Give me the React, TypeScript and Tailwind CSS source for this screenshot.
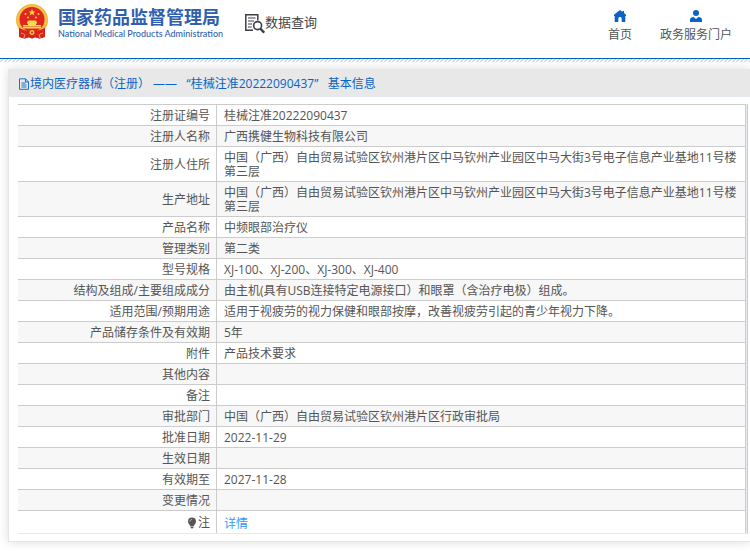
import React from "react";

type Row = { label: string; value: string };

const rows: Row[] = [
  { label: "注册证编号", value: "桂械注准20222090437" },
  { label: "注册人名称", value: "广西携健生物科技有限公司" },
  { label: "注册人住所", value: "中国（广西）自由贸易试验区钦州港片区中马钦州产业园区中马大街3号电子信息产业基地11号楼第三层" },
  { label: "生产地址", value: "中国（广西）自由贸易试验区钦州港片区中马钦州产业园区中马大街3号电子信息产业基地11号楼第三层" },
  { label: "产品名称", value: "中频眼部治疗仪" },
  { label: "管理类别", value: "第二类" },
  { label: "型号规格", value: "XJ-100、XJ-200、XJ-300、XJ-400" },
  { label: "结构及组成/主要组成成分", value: "由主机(具有USB连接特定电源接口）和眼罩（含治疗电极）组成。" },
  { label: "适用范围/预期用途", value: "适用于视疲劳的视力保健和眼部按摩，改善视疲劳引起的青少年视力下降。" },
  { label: "产品储存条件及有效期", value: "5年" },
  { label: "附件", value: "产品技术要求" },
  { label: "其他内容", value: "" },
  { label: "备注", value: "" },
  { label: "审批部门", value: "中国（广西）自由贸易试验区钦州港片区行政审批局" },
  { label: "批准日期", value: "2022-11-29" },
  { label: "生效日期", value: "" },
  { label: "有效期至", value: "2027-11-28" },
  { label: "变更情况", value: "" },
];

function Emblem() {
  return (
    <svg viewBox="0 0 32 36" className="h-9 w-8 shrink-0" aria-hidden="true">
      <path d="M5 24h22l1 9-5 1.500-4-2-3 2-3-2-4 2-5-1.500z" fill="#d8231f" />
      <circle cx="16" cy="16" r="16" fill="#f0b63c" />
      <circle cx="16" cy="16" r="14" fill="none" stroke="#f8d765" strokeWidth="1" strokeDasharray="2 1" />
      <circle cx="16" cy="15.500" r="12.500" fill="#e1251f" />
      <path d="M16 5l1 2.500h2.600l-2.100 1.600.8 2.500-2.300-1.500-2.300 1.500.8-2.500-2.100-1.600H15z" fill="#f9d94d" />
      <g fill="#f9d94d">
        <circle cx="9.500" cy="10" r="1" />
        <circle cx="22.500" cy="10" r="1" />
        <circle cx="12" cy="13.500" r="1" />
        <circle cx="20" cy="13.500" r="1" />
        <path d="M11 18l1.500-1.500h7L21 18v1.500h-1V21h5v3.500H7V21h5v-1.500h-1z" />
      </g>
      <path d="M7 22.500h18" stroke="#dc702a" strokeWidth=".6" />
      <path d="M3 23.500c4 3 8 3 10 3.500l3-1 3 1c2-.5 6-.5 10-3.500v9.500l-5 1.500-5-1-3 1-3-1-5 1-5-1.500z" fill="#d8231f" />
      <circle cx="16" cy="28.500" r="2.500" fill="#f3c044" />
      <circle cx="16" cy="28.500" r="1" fill="#d8231f" />
      <path d="M9 30l-1 4M23 30l1 4M5 29l3 1M27 29l-3 1" stroke="#f3c044" strokeWidth=".8" />
    </svg>
  );
}

function SearchDocument() {
  return (
    <svg viewBox="0 0 20 20" className="size-5" fill="none" stroke="#3d3c48" aria-hidden="true">
      <path d="M8 16.200H.8V.8h12v5.700" strokeWidth="1.500" />
      <path d="M3 4h7.500M3 7h6M3 10h4M3 13h3.500" strokeWidth="1.200" />
      <circle cx="12.600" cy="11.600" r="4" strokeWidth="1.600" />
      <path d="M15.500 14.700l3.700 4" strokeWidth="2.400" />
    </svg>
  );
}

function Header() {
  return (
    <header>
      <div className="flex h-[58px] items-start justify-between bg-white pl-4 pr-[18px]">
        <div className="flex items-start">
          <a href="#home" className="flex items-start gap-[10px] pt-1 text-[#315fae]">
            <Emblem />
            <span className="block pt-[2px]">
              <span className="block text-[18px] font-bold leading-[22px]">国家药品监督管理局</span>
              <span className="block font-['Lato',sans-serif] text-[9px] font-medium leading-3">
                National Medical Products Administration
              </span>
            </span>
          </a>
          <a href="#search" className="ml-[22px] flex items-start pt-3 text-[#454545]">
            <span className="pt-[2px]">
              <SearchDocument />
            </span>
            <span className="text-[13px] leading-5">数据查询</span>
          </a>
        </div>
        <nav className="flex gap-7 pt-[9px] text-[#555]">
          <a href="#home" className="flex flex-col items-center gap-[5px]">
            <svg viewBox="0 0 12 12" className="h-[14px] w-3" fill="#0863c5" aria-hidden="true">
              <path d="M6 0L0 4.700V6h.7v6h3.600V8.700C4.300 6.500 7.700 6.500 7.700 8.700V12h3.600V6h.7V4.700L10 3V1H8.500v1z" />
            </svg>
            <span className="leading-[14px]">首页</span>
          </a>
          <a href="#portal" className="flex flex-col items-center gap-[5px]">
            <svg viewBox="0 0 12 12" className="h-[14px] w-3" fill="#0863c5" aria-hidden="true">
              <circle cx="6" cy="3" r="3" />
              <path d="M0 12V9.800C0 8 1.500 7 3.700 7L6 9l2.300-2C10.500 7 12 8 12 9.800V12z" />
            </svg>
            <span className="leading-[14px]">政务服务门户</span>
          </a>
        </nav>
      </div>
      <div className="h-px bg-[#0066bf]" />
      <div className="h-[3px] bg-[linear-gradient(135deg,#fff_25%,#ddd_25%,#ddd_50%,#fff_50%,#fff_75%,#ddd_75%)] bg-[length:4px_4px]" />
    </header>
  );
}

export default function App() {
  return (
    <div className="min-h-screen overflow-x-hidden bg-white font-['Open_Sans','Noto_Sans_CJK_SC',sans-serif] text-[12px] leading-[14px] text-[#555]">
      <Header />
      <main className="pb-2 pl-2 pt-[7px]">
        <section className="border-b border-l border-[#e6e6e6] bg-white pb-[7px] shadow-[0_0_10px_rgba(0,0,0,0.14)]">
          <h1 className="flex h-7 items-center border-b border-[#e6eaf5] bg-[#e8e8e8] pl-[9px] pt-[2px] text-[#0863c5]">
            <svg viewBox="0 0 12 12" className="size-3 shrink-0" fill="none" stroke="currentColor" strokeWidth=".9" aria-hidden="true">
              <path d="M1.500.8h6L10.500 4v7.300h-9zM7.500.8V4h3M3.500 5h4M3.500 7h5M3.500 9h5" />
            </svg>
            境内医疗器械（注册） ——&nbsp;&nbsp; “桂械注准20222090437”&nbsp;&nbsp; 基本信息
          </h1>
          <div className="ml-[9px] mr-[2px] mt-[7px] border-b border-r border-b-[#e6e9f3] border-r-[#ccc] bg-[#e9ebf5] pr-px">
            <table className="w-full border-separate border-spacing-0 border-t border-[#ccc] bg-white">
              <tbody>
                {rows.map((row) => (
                  <tr key={row.label} className="even:bg-[#f7f7f7]">
                    <th scope="row" className="w-[199px] border-b border-r border-[#ccc] pb-[2px] pr-[6px] pt-1 text-right font-normal">
                      {row.label}
                    </th>
                    <td className="h-[21px] border-b border-r border-[#ccc] pb-[2px] pl-[7px] pr-[5px] pt-1">{row.value}</td>
                  </tr>
                ))}
                <tr>
                  <th scope="row" className="border-r border-[#ccc] pb-[3px] pr-[6px] pt-[5px] font-normal">
                    <span className="flex items-center justify-end">
                      <svg viewBox="0 0 12 12" className="size-3" aria-hidden="true">
                        <path d="M6 .5a4 4 0 0 1 4 4c0 2.500-2 3-2.200 4.500H4.200C4 7.500 2 7 2 4.500a4 4 0 0 1 4-4zM4.500 9.500h3v1l-1 1h-1l-1-1z" fill="#555" />
                        <path d="M4 4.500C4 3 5 2.500 6 2.500" fill="none" stroke="#ddd" strokeWidth=".8" />
                      </svg>
                      注
                    </span>
                  </th>
                  <td className="border-r border-[#ccc] pb-[2px] pl-[7px] pt-[6px]">
                    <a href="#details" className="text-[#3399ff]">详情</a>
                  </td>
                </tr>
              </tbody>
            </table>
          </div>
        </section>
      </main>
    </div>
  );
}
